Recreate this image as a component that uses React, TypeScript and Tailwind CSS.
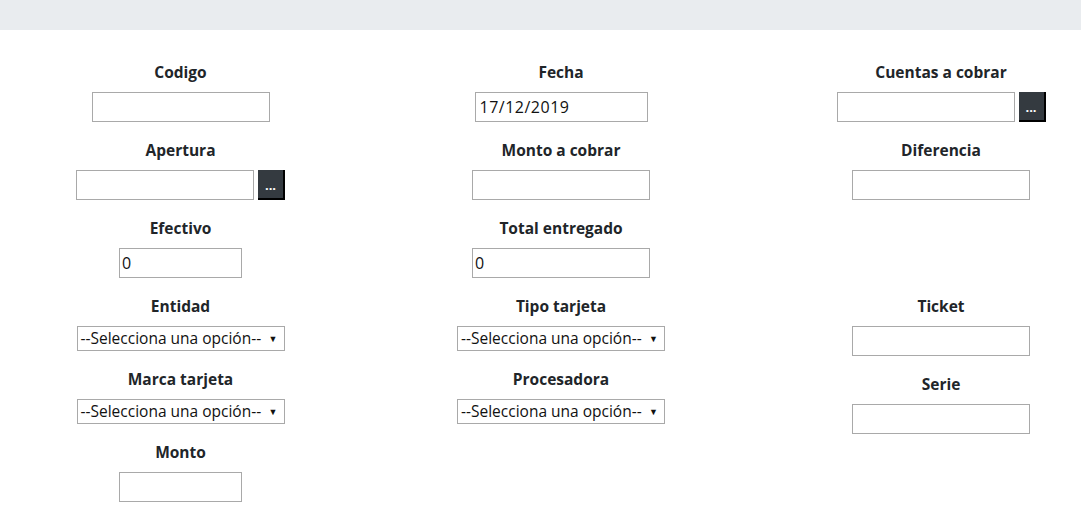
import React from "react";

const font = { fontFamily: '"Open Sans", "Noto Sans", sans-serif' };

function Label({ text }: { text: string }) {
  return (
    <label className="block h-[22px] leading-[22px] mb-[9px] text-[15.5px] font-bold text-[#212529] text-center">
      {text}
    </label>
  );
}

function TextInput({ value = "", w = "w-[178px]" }: { value?: string; w?: string }) {
  return (
    <input
      readOnly
      value={value}
      className={`${w} h-[30px] border border-[#a9a9a9] bg-white px-[2px] text-[16px] text-[#111] outline-none`}
    />
  );
}

function DotsButton() {
  return (
    <button className="ml-[4px] w-[27px] h-[30px] bg-[#343a40] border-r-2 border-b-2 border-black text-white text-[13px] font-bold leading-none flex items-center justify-center pt-[3px]">
      ...
    </button>
  );
}

function SelectBox() {
  return (
    <div className="w-[208px] h-[25px] border border-[#a9a9a9] bg-white flex items-center justify-between pl-[3px] pr-[6px] text-[15.5px] whitespace-nowrap text-[#111]">
      <span>--Selecciona una opción--</span>
      <span className="text-[9px]">▼</span>
    </div>
  );
}

function Group({ label, children }: { label: string; children: React.ReactNode }) {
  return (
    <div className="flex flex-col items-center mb-[17px]">
      <Label text={label} />
      <div className="flex items-center">{children}</div>
    </div>
  );
}

export default function App() {
  return (
    <div className="w-[1081px] h-[512px] bg-white overflow-hidden" style={font}>
      <div className="h-[30px] bg-[#e9ecef]" />
      <div className="grid grid-cols-[361px_400px_360px] pt-[31px]">
        <div className="flex flex-col">
          <Group label="Codigo">
            <TextInput />
          </Group>
          <Group label="Apertura">
            <TextInput />
            <DotsButton />
          </Group>
          <Group label="Efectivo">
            <TextInput value="0" w="w-[123px]" />
          </Group>
          <Group label="Entidad">
            <SelectBox />
          </Group>
          <Group label="Marca tarjeta">
            <SelectBox />
          </Group>
          <Group label="Monto">
            <TextInput w="w-[123px]" />
          </Group>
        </div>
        <div className="flex flex-col">
          <Group label="Fecha">
            <input
              readOnly
              value="17/12/2019"
              className="w-[173px] h-[30px] border border-[#a9a9a9] bg-white pl-[4px] text-[16px] tracking-[0.5px] text-[#111] outline-none"
            />
          </Group>
          <Group label="Monto a cobrar">
            <TextInput />
          </Group>
          <Group label="Total entregado">
            <TextInput value="0" />
          </Group>
          <Group label="Tipo tarjeta">
            <SelectBox />
          </Group>
          <Group label="Procesadora">
            <SelectBox />
          </Group>
        </div>
        <div className="flex flex-col">
          <Group label="Cuentas a cobrar">
            <TextInput />
            <DotsButton />
          </Group>
          <Group label="Diferencia">
            <TextInput />
          </Group>
          <div className="h-[78px]" />
          <Group label="Ticket">
            <TextInput />
          </Group>
          <Group label="Serie">
            <TextInput />
          </Group>
        </div>
      </div>
    </div>
  );
}
